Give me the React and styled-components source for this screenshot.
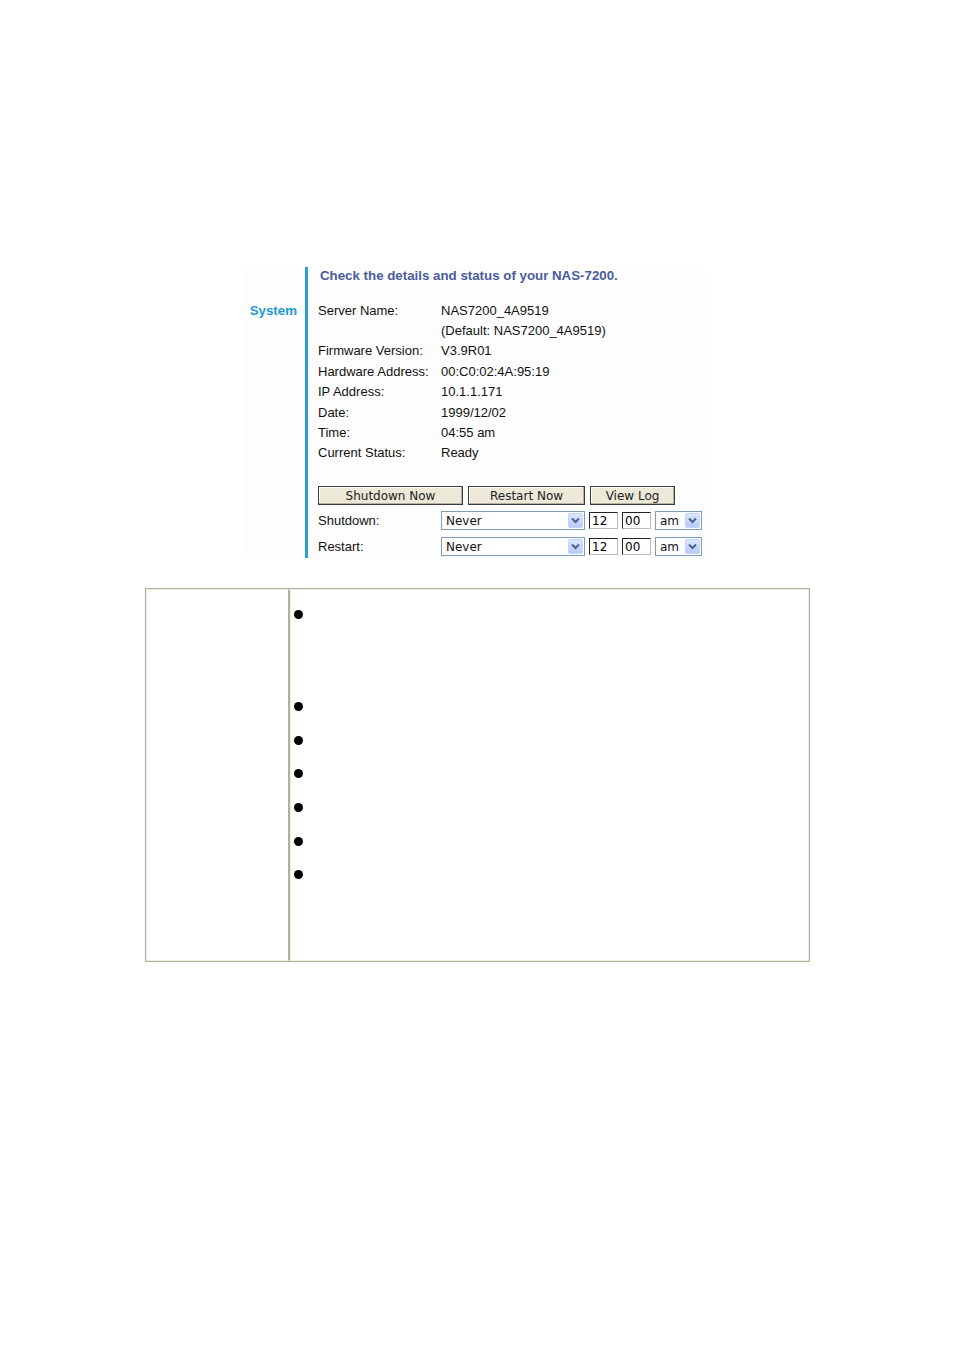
import React from 'react';
import styled, { createGlobalStyle } from 'styled-components';

const GlobalStyle = createGlobalStyle`
  html, body {
    margin: 0;
    padding: 0;
    background: #ffffff;
  }
  body {
    font-family: 'Liberation Sans', Arial, sans-serif;
    color: #000;
  }
`;

const Page = styled.div`
  width: 954px;
  height: 1350px;
  display: flex;
  flex-direction: column;
  align-items: flex-start;
  padding-top: 267px;
  box-sizing: border-box;
`;

const Panel = styled.section`
  margin-left: 245px;
  width: 460px;
  display: flex;
  background: #fdfdfd;
`;

const SideLabel = styled.div`
  width: 60px;
  padding-top: 36px;
  padding-right: 8px;
  text-align: right;
  box-sizing: border-box;
  color: #1f9bd2;
  font-weight: bold;
  font-size: 13.3px;
`;

const Content = styled.div`
  border-left: 3px solid #2aa0d2;
  padding: 1px 0 0 10px;
  display: flex;
  flex-direction: column;
  height: 291px;
  box-sizing: border-box;
`;

const Title = styled.h2`
  margin: 0 0 0 2px;
  font-size: 13.3px;
  line-height: 16px;
  font-weight: bold;
  color: #4a5c9a;
`;

const InfoList = styled.div`
  margin-top: 16px;
  display: grid;
  grid-template-columns: 123px auto;
  grid-auto-rows: 20.4px;
  font-size: 13px;
  align-items: center;
  color: #111;
`;

const Label = styled.span``;
const Value = styled.span``;

const ButtonRow = styled.div`
  margin-top: 23px;
  display: flex;
  gap: 5px;
`;

const Button = styled.button`
  width: ${p => p.$w}px;
  height: 19px;
  padding: 0;
  background: #ece9d8;
  border: 1px solid #3a3a3a;
  box-shadow: inset -1px -1px 0 #b5b2a3, inset 1px 1px 0 #fff;
  font-family: 'DejaVu Sans', Verdana, sans-serif;
  font-size: 12px;
  color: #222;
`;

const ScheduleRow = styled.div`
  margin-top: ${p => p.$top}px;
  display: flex;
  align-items: center;
  font-size: 13px;
`;

const RowLabel = styled.span`
  width: 123px;
  color: #111;
`;

const Controls = styled.div`
  display: flex;
  gap: 4px;
  align-items: center;
`;

const Select = styled.div`
  width: ${p => p.$w}px;
  height: 19px;
  box-sizing: border-box;
  border: 1px solid #7f9db9;
  background: #fff;
  display: flex;
  align-items: center;
  justify-content: space-between;
  padding: 0 1px 0 4px;
  font-family: 'DejaVu Sans', Verdana, sans-serif;
  font-size: 12px;
  color: #111;
`;

const Arrow = styled.span`
  width: 15px;
  height: 15px;
  box-sizing: border-box;
  border: 1px solid #c3d3fd;
  border-radius: 2px;
  background: linear-gradient(#dde8fe, #b6cafc);
  display: flex;
  align-items: center;
  justify-content: center;
`;

const TimeInput = styled.div`
  width: ${p => p.$w}px;
  height: 17px;
  box-sizing: border-box;
  border: 1px solid #222;
  border-right-color: #bbb;
  border-bottom-color: #bbb;
  background: #fff;
  padding-left: 2px;
  display: flex;
  align-items: center;
  font-family: 'DejaVu Sans', Verdana, sans-serif;
  font-size: 12px;
`;

const Table = styled.div`
  margin: 30px 0 0 145px;
  width: 665px;
  height: 374px;
  box-sizing: border-box;
  border: 1px solid #b3af9f;
  display: flex;
  padding: 0;
`;

const Cell = styled.div`
  box-sizing: border-box;
  border: 1px solid #efece0;
  width: ${p => (p.$w ? `${p.$w}px` : 'auto')};
  flex: ${p => (p.$w ? 'none' : 1)};
`;

const LeftCell = styled(Cell)`
  border-right: 2px solid #b3af9f;
`;

const Bullets = styled.ul`
  list-style: none;
  margin: 0;
  padding: 20px 0 0 3px;
`;

const Bullet = styled.li`
  height: ${p => p.$h}px;
  display: flex;
  align-items: flex-start;
  &::before {
    content: '';
    width: 9px;
    height: 9px;
    border-radius: 50%;
    background: #000;
  }
`;

const Chevron = () => (
  <svg width="9" height="7" viewBox="0 0 9 7">
    <path d="M1 1.5 L4.5 5 L8 1.5" fill="none" stroke="#4d6185" strokeWidth="2" />
  </svg>
);

const Dropdown = ({ w, value }) => (
  <Select $w={w}>
    <span>{value}</span>
    <Arrow><Chevron /></Arrow>
  </Select>
);

const info = [
  ['Server Name:', 'NAS7200_4A9519'],
  ['', '(Default: NAS7200_4A9519)'],
  ['Firmware Version:', 'V3.9R01'],
  ['Hardware Address:', '00:C0:02:4A:95:19'],
  ['IP Address:', '10.1.1.171'],
  ['Date:', '1999/12/02'],
  ['Time:', '04:55 am'],
  ['Current Status:', 'Ready'],
];

const bulletHeights = [92, 34, 33, 34, 34, 33, 34];

const Schedule = ({ label, top }) => (
  <ScheduleRow $top={top}>
    <RowLabel>{label}</RowLabel>
    <Controls>
      <Dropdown w={144} value="Never" />
      <TimeInput $w={29}>12</TimeInput>
      <TimeInput $w={29}>00</TimeInput>
      <Dropdown w={47} value="am" />
    </Controls>
  </ScheduleRow>
);

export default function App() {
  return (
    <>
      <GlobalStyle />
      <Page>
        <Panel>
          <SideLabel>System</SideLabel>
          <Content>
            <Title>Check the details and status of your NAS-7200.</Title>
            <InfoList>
              {info.map(([l, v], i) => (
                <React.Fragment key={i}>
                  <Label>{l}</Label>
                  <Value>{v}</Value>
                </React.Fragment>
              ))}
            </InfoList>
            <ButtonRow>
              <Button $w={145}>Shutdown Now</Button>
              <Button $w={117}>Restart Now</Button>
              <Button $w={85}>View Log</Button>
            </ButtonRow>
            <Schedule label="Shutdown:" top={6} />
            <Schedule label="Restart:" top={7} />
          </Content>
        </Panel>
        <Table>
          <LeftCell $w={144} />
          <Cell>
            <Bullets>
              {bulletHeights.map((h, i) => (
                <Bullet key={i} $h={h} />
              ))}
            </Bullets>
          </Cell>
        </Table>
      </Page>
    </>
  );
}
